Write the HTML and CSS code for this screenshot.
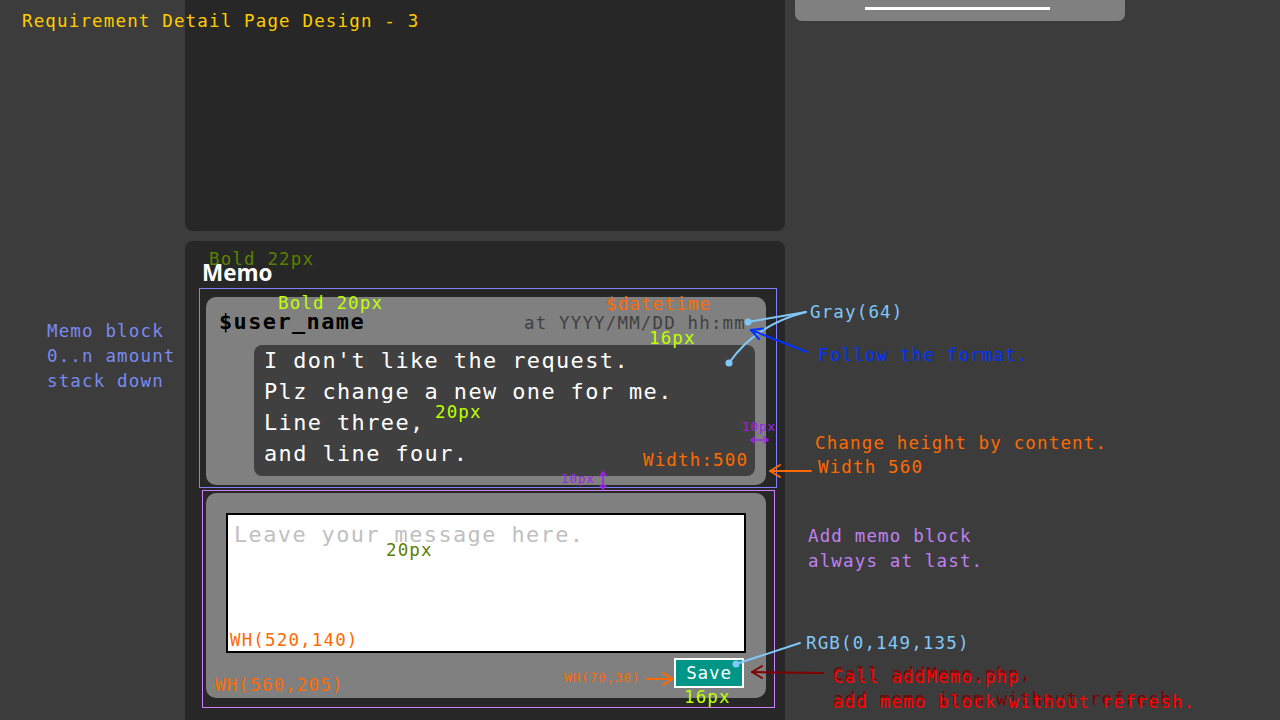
FILE: index.html
```html
<!DOCTYPE html>
<html lang="en">
<head>
<meta charset="utf-8">
<title>Requirement Detail Page Design - 3</title>
<link rel="stylesheet" href="styles.css">
</head>
<body>
<div class="page">
  <aside class="gutter"></aside>
  <main class="main">
    <section class="panel panel-top"></section>
    <section class="panel panel-memo">
      <h2 class="memo-title">Memo</h2>
      <div class="outline outline-list">
        <article class="memo">
          <header class="memo-head">
            <span class="memo-user">$user_name</span>
            <span class="memo-time">at YYYY/MM/DD hh:mm</span>
          </header>
          <p class="memo-body">I don't like the request.<br>Plz change a new one for me.<br>Line three,<br>and line four.</p>
        </article>
      </div>
      <div class="outline outline-add">
        <form class="memo-add">
          <textarea class="memo-input" placeholder="Leave your message here."></textarea>
          <div class="memo-actions"><button type="button" class="save-btn">Save</button></div>
        </form>
      </div>
    </section>
  </main>
  <aside class="side">
    <div class="top-btn"><span class="top-btn-label"><span class="top-btn-text">SUBMIT</span></span></div>
  </aside>
</div>

<div class="notes">
  <div class="note n-title">Requirement Detail Page Design - 3</div>
  <div class="note n-bold22">Bold 22px</div>
  <div class="note n-bold20">Bold 20px</div>
  <div class="note n-datetime">$datetime</div>
  <div class="note n-16a">16px</div>
  <div class="note n-20a">20px</div>
  <div class="note n-w500">Width:500</div>
  <div class="note small n-10a">10px</div>
  <div class="note small n-10b">10px</div>
  <div class="note n-20b">20px</div>
  <div class="note n-wh520">WH(520,140)</div>
  <div class="note n-wh560">WH(560,205)</div>
  <div class="note small n-wh70">WH(70,30)</div>
  <div class="note n-16b">16px</div>
  <div class="note multi n-memoblock">Memo block
0..n amount
stack down</div>
  <div class="note n-gray">Gray(64)</div>
  <div class="note n-follow">Follow the format.</div>
  <div class="note n-change">Change height by content.</div>
  <div class="note n-w560">Width 560</div>
  <div class="note multi n-addmemo">Add memo block
always at last.</div>
  <div class="note n-rgb">RGB(0,149,135)</div>
  <div class="note multi n-call-shadow">Call addMemo.php,
add memo item without refresh.</div>
  <div class="note multi n-call">Call addMemo.php
add memo block without refresh.</div>
</div>

<svg class="wires" width="1280" height="720" viewBox="0 0 1280 720" fill="none">
  <g stroke="#80c8f8" stroke-width="2" stroke-linecap="round">
    <path d="M806 312 L748 322"/>
    <path d="M806 312 Q755 325 729 363"/>
    <path d="M800 643 L736 664"/>
  </g>
  <g fill="#80c8f8">
    <circle cx="748" cy="322" r="3.5"/>
    <circle cx="729" cy="363" r="3.5"/>
    <circle cx="736" cy="664" r="3.5"/>
  </g>
  <g stroke="#0033ff" stroke-width="2" stroke-linecap="round" stroke-linejoin="round">
    <path d="M807 352 L751 330"/>
    <path d="M759 339 L751 330 L763 328.6"/>
  </g>
  <g stroke="#ff6a00" stroke-width="2" stroke-linecap="round" stroke-linejoin="round">
    <path d="M811 471 L770 471"/>
    <path d="M780 465 L770 471 L780 477"/>
    <path d="M647 679 L672 679"/>
    <path d="M663 673 L672 679 L663 685"/>
  </g>
  <g stroke="#800000" stroke-width="2" stroke-linecap="round" stroke-linejoin="round">
    <path d="M823 673 L752 672"/>
    <path d="M762 666 L752 672 L762 678"/>
  </g>
  <g stroke="#a020f0" stroke-width="1.5" stroke-linecap="round" stroke-linejoin="round">
    <path d="M751 440 L768 440"/>
    <path d="M755 437 L751 440 L755 443"/>
    <path d="M764 437 L768 440 L764 443"/>
    <path d="M603 472 L603 489"/>
    <path d="M600 476 L603 472 L606 476"/>
    <path d="M600 485 L603 489 L606 485"/>
  </g>
</svg>
</body>
</html>
```

FILE: styles.css
```css
* { box-sizing: border-box; }
html, body { margin: 0; padding: 0; }
body {
  position: relative;
  width: 1280px;
  height: 720px;
  overflow: hidden;
  background: #3c3c3c;
  font-family: "DejaVu Sans Mono", monospace;
}

.page {
  display: grid;
  grid-template-columns: 185px 600px 1fr;
  height: 720px;
}

.main { display: flex; flex-direction: column; }

.panel { background: #272727; }
.panel-top { height: 231px; border-radius: 0 0 8px 8px; }
.panel-memo {
  flex: 1;
  margin-top: 10px;
  padding-top: 17px;
  border-radius: 8px 8px 0 0;
}

.memo-title {
  margin: 0 0 0 17px;
  font: 700 22.5px/30px "Open Sans", sans-serif;
  color: #fff;
}

.outline { border: 1px solid; }
.outline-list {
  border-color: #8080ff;
  width: 578px;
  margin-left: 14px;
  padding: 8px 10px 2px 6px;
}
.outline-add {
  border-color: #d080ff;
  width: 573px;
  margin: 2px 0 0 17px;
  padding: 2px 8px 9px 3px;
}

.memo {
  height: 188px;
  background: #808080;
  border-radius: 10px;
  padding: 12px 11px 10px 13px;
}
.memo-head {
  display: flex;
  justify-content: space-between;
  align-items: baseline;
  line-height: 26px;
  padding-right: 9px;
}
.memo-user {
  font-weight: 700;
  font-size: 21.9px;
  letter-spacing: 1.42px;
  color: #000;
}
.memo-time {
  font-size: 17.5px;
  letter-spacing: 1.15px;
  color: #404040;
}
.memo-body {
  height: 131px;
  margin: 9px 0 0 35px;
  padding: 0 10px 7px;
  background: #404040;
  border-radius: 8px;
  color: #fff;
  font-size: 21.9px;
  letter-spacing: 1.42px;
  line-height: 31px;
}

.memo-add {
  height: 205px;
  margin: 0;
  background: #808080;
  border-radius: 10px;
  padding: 20px 21px 10px 20px;
}
.memo-input {
  display: block;
  width: 520px;
  height: 140px;
  margin: 0;
  padding: 4px 6px;
  border: 2px solid #000;
  background: #fff;
  resize: none;
  outline: none;
  font-family: inherit;
  font-size: 21.9px;
  letter-spacing: 1.42px;
  line-height: 31px;
  color: #000;
}
.memo-input::placeholder { color: #c0c0c0; opacity: 1; }
.memo-actions {
  display: flex;
  justify-content: flex-end;
  margin-top: 5px;
  padding-right: 1px;
}
.save-btn {
  width: 70px;
  height: 30px;
  padding: 0;
  border: 2px solid #fff;
  background: rgb(0, 149, 135);
  color: #fff;
  font-family: inherit;
  font-size: 17.5px;
  letter-spacing: 0.9px;
  line-height: 26px;
}

.side { padding-left: 10px; }
.top-btn {
  width: 330px;
  height: 21px;
  background: #808080;
  border-radius: 0 0 7px 7px;
  padding-left: 70px;
}
.top-btn-label {
  display: block;
  width: 185px;
  height: 10px;
  overflow: hidden;
  border-bottom: 3px solid #fff;
}
.top-btn-text {
  display: block;
  margin-top: -25px;
  font: 700 28px/28px "Open Sans", sans-serif;
  letter-spacing: 10px;
  text-align: center;
  color: #fff;
}

/* annotation layer */
.notes { position: absolute; inset: 0; pointer-events: none; }
.note {
  position: absolute;
  font-size: 17.5px;
  letter-spacing: 1.15px;
  line-height: 17.5px;
  white-space: pre;
}
.note.multi { line-height: 25px; }
.note.small { font-size: 12.75px; letter-spacing: 0.8px; line-height: 12.75px; }

.n-title { left: 22px; top: 12.5px; color: #ffcc00; }
.n-bold22 { left: 209px; top: 251px; color: #5a8000; }
.n-bold20 { left: 278px; top: 295px; color: #bfff00; }
.n-datetime { left: 606px; top: 296px; color: #ff6a00; }
.n-16a { left: 649px; top: 330px; color: #bfff00; }
.n-20a { left: 435px; top: 403.5px; color: #bfff00; }
.n-w500 { left: 643px; top: 452px; color: #ff6a00; }
.n-10a { left: 742px; top: 421px; color: #a020f0; }
.n-10b { left: 561px; top: 472.5px; color: #a020f0; }
.n-20b { left: 386px; top: 542px; color: #5a8000; }
.n-wh520 { left: 230px; top: 632px; color: #ff6a00; }
.n-wh560 { left: 215px; top: 677px; color: #ff6a00; }
.n-wh70 { left: 564px; top: 672px; font-size: 13px; letter-spacing: 0.85px; color: #ff6a00; }
.n-16b { left: 684px; top: 688.5px; color: #bfff00; }
.n-memoblock { left: 47px; top: 318.75px; color: #7b8af0; }
.n-gray { left: 810px; top: 303.5px; color: #80c8f8; }
.n-follow { left: 818px; top: 347px; color: #0033ff; }
.n-change { left: 815px; top: 435px; color: #ff6a00; }
.n-w560 { left: 818px; top: 458.5px; color: #ff6a00; }
.n-addmemo { left: 808px; top: 524px; color: #c080f0; }
.n-rgb { left: 806px; top: 635px; color: #80c8f8; }
.n-call-shadow { left: 833px; top: 661.5px; color: #800000; }
.n-call { left: 833px; top: 664.75px; color: #ff0000; }

.wires { position: absolute; left: 0; top: 0; pointer-events: none; }
```
